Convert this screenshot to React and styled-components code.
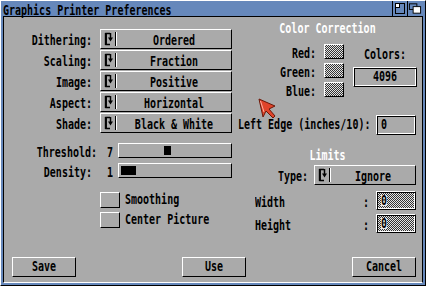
import React from "react";
import styled, { createGlobalStyle, css } from "styled-components";

const GRAY = "#aaaaaa";
const BLUE = "#6688bb";

const GlobalStyle = createGlobalStyle`
  html, body { margin: 0; padding: 0; background: ${GRAY}; }
  * { box-sizing: border-box; }
`;

const raised = css`
  border-top: 1px solid #fff;
  border-left: 1px solid #fff;
  border-right: 1px solid #000;
  border-bottom: 1px solid #000;
`;

const ridge = css`
  ${raised}
  box-shadow: inset 1px 1px 0 #000, inset -1px -1px 0 #fff;
`;

const dither = css`
  background: repeating-conic-gradient(#333 0 25%, #e4e4e4 0 50%) 0 0 / 2px 2px;
`;

// topaz-ish text: narrow mono glyphs stretched like a hires screen
const T = styled.span`
  display: inline-block;
  font-family: "DejaVu Sans Mono", "Liberation Mono", monospace;
  font-weight: bold;
  font-size: 10px;
  line-height: 10px;
  white-space: pre;
  color: ${(p) => p.$c || "#000"};
  transform: scaleY(1.35);
`;

const Window = styled.div`
  position: relative;
  width: 426px;
  height: 286px;
  display: flex;
  flex-direction: column;
  background: ${BLUE};
  border-top: 1px solid #fff;
  border-left: 1px solid #fff;
  border-right: 1px solid #000;
  border-bottom: 1px solid #000;
  overflow: hidden;
`;

const TitleBar = styled.div`
  height: 15px;
  display: flex;
  align-items: center;
  padding: 0 3px 0 2px;
`;

const TitleText = styled.div`
  flex: 1;
`;

const TitleGadget = styled.div`
  width: 15px;
  height: 15px;
  display: flex;
  align-items: center;
  justify-content: center;
  border-left: 1px solid #000;
`;

const Frame = styled.div`
  flex: 1;
  display: flex;
  padding: 0 2px 2px 2px;
`;

const Body = styled.div`
  flex: 1;
  display: flex;
  flex-direction: column;
  background: ${GRAY};
  border-top: 1px solid #000;
  border-left: 1px solid #000;
  border-right: 1px solid #000;
  border-bottom: 1px solid #fff;
`;

const MainRow = styled.div`
  flex: 1;
  display: flex;
`;

const LeftPanel = styled.div`
  width: 233px;
  display: flex;
  flex-direction: column;
  padding-top: 12px;
`;

const RightPanel = styled.div`
  width: 181px;
  display: flex;
  flex-direction: column;
`;

const FieldRow = styled.div`
  display: flex;
  align-items: center;
  height: ${(p) => p.$h}px;
  margin-top: ${(p) => p.$mt || 0}px;
`;

const FieldLabel = styled.div`
  width: ${(p) => p.$w || 96}px;
  padding-right: ${(p) => (p.$pr === undefined ? 8 : p.$pr)}px;
  text-align: right;
`;

const Cycle = styled.div`
  ${raised}
  width: ${(p) => p.$w}px;
  height: 20px;
  display: flex;
  align-items: center;
  padding-left: 3px;
`;

const CycleSep = styled.div`
  width: 2px;
  align-self: stretch;
  margin: 2px 0 2px 2px;
  border-left: 1px solid #000;
  border-right: 1px solid #fff;
`;

const CycleText = styled.div`
  flex: 1;
  text-align: center;
`;

const LevelValue = styled.div`
  width: 18px;
  padding-right: 5px;
  text-align: right;
`;

const SliderTrack = styled.div`
  ${raised}
  width: 114px;
  height: 15px;
  padding: 2px;
  display: flex;
`;

const Knob = styled.div`
  height: 100%;
  background: #000;
`;

const CheckBox = styled.div`
  ${raised}
  width: 20px;
  height: 16px;
  margin-right: 5px;
`;

const GroupTitle = styled.div`
  height: 13px;
  margin-top: ${(p) => p.$mt}px;
  display: flex;
  align-items: center;
  justify-content: center;
`;

const ColorArea = styled.div`
  display: flex;
  margin-top: 9px;
`;

const ColorList = styled.div`
  display: flex;
  flex-direction: column;
  gap: 4px;
`;

const ColorRow = styled.div`
  display: flex;
  align-items: center;
  height: 15px;
`;

const ColorLabel = styled.div`
  width: 79px;
  margin-right: 8px;
  text-align: right;
`;

const Swatch = styled.div`
  ${raised}
  ${dither}
  width: 20px;
  height: 15px;
`;

const ColorsInfo = styled.div`
  width: 64px;
  margin-left: 9px;
  display: flex;
  flex-direction: column;
  align-items: center;
`;

const Caption = styled.div`
  height: 13px;
  margin-top: 4px;
  display: flex;
  align-items: center;
`;

const NumBox = styled.div`
  ${ridge}
  width: 64px;
  height: 20px;
  margin-top: 6px;
  display: flex;
  align-items: center;
  justify-content: center;
`;

const EdgeRow = styled.div`
  display: flex;
  align-items: center;
  justify-content: space-between;
  height: 20px;
  margin-top: 18px;
  padding: 0 2px 0 1px;
`;

const StrBox = styled.div`
  ${ridge}
  ${(p) => p.$ghost && dither}
  width: 40px;
  height: ${(p) => p.$h}px;
  display: flex;
  align-items: center;
  padding-left: 4px;
`;

const Cursor = styled.span`
  display: flex;
  align-items: center;
  height: 11px;
  background: #e8e8e8;
`;

const TypeRow = styled.div`
  display: flex;
  align-items: center;
  height: 20px;
  margin-top: 3px;
`;

const TypeLabel = styled.div`
  width: 71px;
  margin-right: 6px;
  text-align: right;
`;

const LimitRow = styled.div`
  display: flex;
  align-items: center;
  height: 19px;
  margin-top: ${(p) => p.$mt}px;
  padding: 0 2px 0 18px;
`;

const LimitLabel = styled.div`
  flex: 1;
`;

const Colon = styled.div`
  margin-right: 7px;
`;

const ButtonRow = styled.div`
  display: flex;
  justify-content: space-between;
  padding: 0 6px 5px 8px;
`;

const Button = styled.div`
  ${raised}
  width: 64px;
  height: 20px;
  display: flex;
  align-items: center;
  justify-content: center;
`;

const Pointer = styled.svg`
  position: absolute;
  left: 256px;
  top: 97px;
`;

const CycleIcon = () => (
  <svg width="9" height="14" viewBox="0 0 9 14">
    <path d="M6 1.5H2V12.5H6" fill="none" stroke="#000" strokeWidth="1.5" />
    <path d="M1.8 1V13" stroke="#000" strokeWidth="2" />
    <path d="M6.5 1V6" stroke="#000" strokeWidth="1.5" />
    <path d="M4 5.5H9L6.5 9.5Z" fill="#000" />
  </svg>
);

const CycleGadget = ({ w, value }) => (
  <Cycle $w={w}>
    <CycleIcon />
    <CycleSep />
    <CycleText>
      <T>{value}</T>
    </CycleText>
  </Cycle>
);

const Slider = ({ value, min, max }) => {
  const inner = 108;
  const step = inner / (max - min + 1);
  return (
    <SliderTrack>
      <Knob style={{ marginLeft: (value - min) * step, width: step }} />
    </SliderTrack>
  );
};

const cycles = [
  ["Dithering:", "Ordered"],
  ["Scaling:", "Fraction"],
  ["Image:", "Positive"],
  ["Aspect:", "Horizontal"],
  ["Shade:", "Black & White"],
];

export default function App() {
  return (
    <>
      <GlobalStyle />
      <Window>
        <TitleBar>
          <TitleText>
            <T>Graphics Printer Preferences</T>
          </TitleText>
          <TitleGadget>
            <svg width="14" height="15" viewBox="0 0 14 15">
              <rect x="2.5" y="2.5" width="9" height="10" fill={BLUE} stroke="#000" />
              <rect x="2.5" y="2.5" width="4" height="4" fill="#fff" stroke="#000" />
            </svg>
          </TitleGadget>
          <TitleGadget>
            <svg width="15" height="15" viewBox="0 0 15 15">
              <rect x="1.5" y="2.5" width="8" height="6" fill={BLUE} stroke="#000" />
              <rect x="5.5" y="5.5" width="8" height="7" fill="#fff" stroke="#000" />
            </svg>
          </TitleGadget>
        </TitleBar>
        <Frame>
          <Body>
            <MainRow>
              <LeftPanel>
                {cycles.map(([label, value], i) => (
                  <FieldRow key={label} $h={20} $mt={i ? 1 : 0}>
                    <FieldLabel>
                      <T>{label}</T>
                    </FieldLabel>
                    <CycleGadget w={132} value={value} />
                  </FieldRow>
                ))}
                <FieldRow $h={15} $mt={10}>
                  <FieldLabel $pr={3}>
                    <T>Threshold:</T>
                  </FieldLabel>
                  <LevelValue>
                    <T>7</T>
                  </LevelValue>
                  <Slider value={7} min={1} max={15} />
                </FieldRow>
                <FieldRow $h={15} $mt={5}>
                  <FieldLabel>
                    <T>Density:</T>
                  </FieldLabel>
                  <LevelValue>
                    <T>1</T>
                  </LevelValue>
                  <Slider value={1} min={1} max={7} />
                </FieldRow>
                <FieldRow $h={16} $mt={14}>
                  <FieldLabel />
                  <CheckBox />
                  <T>Smoothing</T>
                </FieldRow>
                <FieldRow $h={16} $mt={4}>
                  <FieldLabel />
                  <CheckBox />
                  <T>Center Picture</T>
                </FieldRow>
              </LeftPanel>
              <RightPanel>
                <GroupTitle $mt={5}>
                  <T $c="#fff">Color Correction</T>
                </GroupTitle>
                <ColorArea>
                  <ColorList>
                    {["Red:", "Green:", "Blue:"].map((c) => (
                      <ColorRow key={c}>
                        <ColorLabel>
                          <T>{c}</T>
                        </ColorLabel>
                        <Swatch />
                      </ColorRow>
                    ))}
                  </ColorList>
                  <ColorsInfo>
                    <Caption>
                      <T>Colors:</T>
                    </Caption>
                    <NumBox>
                      <T>4096</T>
                    </NumBox>
                  </ColorsInfo>
                </ColorArea>
                <EdgeRow>
                  <T>Left Edge (inches/10):</T>
                  <StrBox $h={20}>
                    <T>0</T>
                  </StrBox>
                </EdgeRow>
                <GroupTitle $mt={14}>
                  <T $c="#fff">Limits</T>
                </GroupTitle>
                <TypeRow>
                  <TypeLabel>
                    <T>Type:</T>
                  </TypeLabel>
                  <CycleGadget w={102} value="Ignore" />
                </TypeRow>
                <LimitRow $mt={6}>
                  <LimitLabel>
                    <T>Width</T>
                  </LimitLabel>
                  <Colon>
                    <T>:</T>
                  </Colon>
                  <StrBox $h={19} $ghost>
                    <Cursor>
                      <T>0</T>
                    </Cursor>
                  </StrBox>
                </LimitRow>
                <LimitRow $mt={4}>
                  <LimitLabel>
                    <T>Height</T>
                  </LimitLabel>
                  <Colon>
                    <T>:</T>
                  </Colon>
                  <StrBox $h={19} $ghost>
                    <Cursor>
                      <T>0</T>
                    </Cursor>
                  </StrBox>
                </LimitRow>
              </RightPanel>
            </MainRow>
            <ButtonRow>
              <Button>
                <T>Save</T>
              </Button>
              <Button>
                <T>Use</T>
              </Button>
              <Button>
                <T>Cancel</T>
              </Button>
            </ButtonRow>
          </Body>
        </Frame>
        <Pointer width="20" height="22" viewBox="0 0 20 22">
          <polygon
            points="2,1 6,19 9,13 16,20 18,18 12,11 18,8"
            fill="#e0442a"
            stroke="#6a1808"
            strokeWidth="1"
          />
          <path d="M3.5 3L7 14" stroke="#ffb0a0" strokeWidth="1" />
        </Pointer>
      </Window>
    </>
  );
}
